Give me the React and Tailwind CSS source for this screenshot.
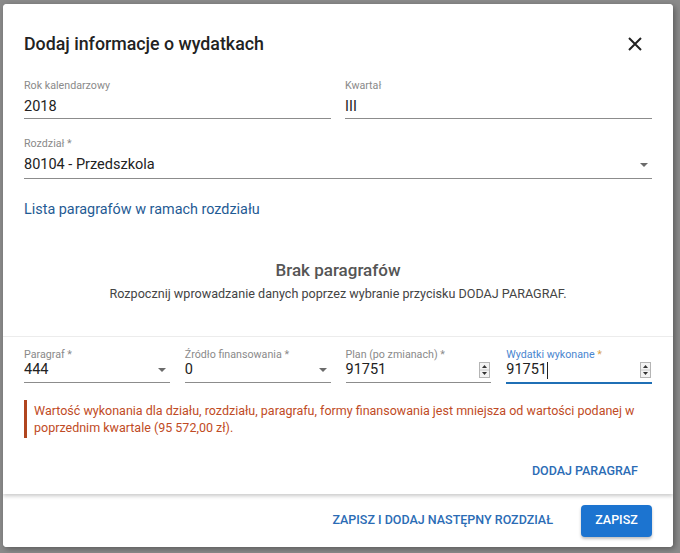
import React from "react";

function Caret() {
  return (
    <svg width="8" height="4" viewBox="0 0 8 4" className="shrink-0">
      <path d="M0 0 L8 0 L4 4 Z" fill="#6b6b6b" />
    </svg>
  );
}

function Spinner() {
  return (
    <svg width="11" height="16" viewBox="0 0 11 16" className="shrink-0">
      <rect x="0.5" y="0.5" width="10" height="15" fill="#f3f3f3" stroke="#b5b5b5" />
      <line x1="1" y1="8" x2="10" y2="8" stroke="#c8c8c8" />
      <path d="M3 6 L8 6 L5.5 3 Z" fill="#333" />
      <path d="M3 10 L8 10 L5.5 13 Z" fill="#333" />
    </svg>
  );
}

function TopField({ label, value }) {
  return (
    <div>
      <div className="text-[10.7px] leading-[13px] text-[#8a8a8a]">{label}</div>
      <div className="pt-[5px] pb-[1px] text-[14.5px] leading-[20px] text-[#222] border-b border-[#8c8c8c]">
        {value}
      </div>
    </div>
  );
}

function RowField({ label, value, select, focused }) {
  return (
    <div>
      <div
        className={
          "text-[10.7px] leading-[13px] " +
          (focused ? "text-[#4a86cf]" : "text-[#8a8a8a]")
        }
      >
        {label} <span className={focused ? "text-[#d9a14a]" : ""}>*</span>
      </div>
      <div
        className={
          "flex items-center justify-between pb-[3px] text-[14.5px] leading-[18px] text-[#222] " +
          (focused ? "border-b-2 border-[#1f6fb5]" : "border-b border-[#8c8c8c] mb-[1px]")
        }
      >
        <span className="flex items-center">
          {value}
          {focused && <span className="inline-block w-[1px] h-[17px] bg-[#222]" />}
        </span>
        {select ? (
          <span className="mr-[4px]">
            <Caret />
          </span>
        ) : (
          <span className="mr-[1px]">
            <Spinner />
          </span>
        )}
      </div>
    </div>
  );
}

export default function App() {
  return (
    <div className="w-[680px] h-[553px] bg-[#8b8b8b] overflow-hidden pt-[4px] pl-[3px] font-[Roboto,sans-serif]">
      <div className="w-[670px] h-[543px] bg-white rounded-[4px] flex flex-col overflow-hidden shadow-[2px_2px_6px_rgba(0,0,0,0.35)]">
        <div className="relative z-10 flex-1 flex flex-col bg-white shadow-[0_2px_4px_rgba(0,0,0,0.22)]">
          {/* header */}
          <div className="flex items-center justify-between pl-[21px] pr-[31px] pt-[28px]">
            <h1 className="text-[17.8px] leading-[24px] font-medium text-[#222]">
              Dodaj informacje o wydatkach
            </h1>
            <svg width="14" height="14" viewBox="0 0 14 14">
              <path d="M1 1 L13 13 M13 1 L1 13" stroke="#222" strokeWidth="2" />
            </svg>
          </div>

          <div className="px-[21px] pt-[23px]">
            <div className="grid grid-cols-2 gap-x-[14px]">
              <TopField label="Rok kalendarzowy" value="2018" />
              <TopField label="Kwartał" value="III" />
            </div>

            <div className="mt-[18px]">
              <div className="text-[10.7px] leading-[13px] text-[#8a8a8a]">Rozdział *</div>
              <div className="flex items-center justify-between pt-[5px] pb-[3px] text-[14.5px] leading-[20px] text-[#222] border-b border-[#8c8c8c]">
                <span>80104 - Przedszkola</span>
                <span className="mr-[4px]">
                  <Caret />
                </span>
              </div>
            </div>

            <div className="mt-[21px] text-[14.4px] leading-[20px] text-[#1f5b94]">
              Lista paragrafów w ramach rozdziału
            </div>
          </div>

          <div className="mt-[38px] pb-[32px] border-b border-[#ececec] text-center">
            <div className="text-[17px] leading-[24px] font-medium text-[#555]">Brak paragrafów</div>
            <div className="mt-[2px] text-[12.6px] leading-[20px] text-[#444]">
              Rozpocznij wprowadzanie danych poprzez wybranie przycisku DODAJ PARAGRAF.
            </div>
          </div>

          <div className="px-[21px] pt-[11px]">
            <div className="grid grid-cols-4 gap-x-[15px]">
              <RowField label="Paragraf" value="444" select />
              <RowField label="Źródło finansowania" value="0" select />
              <RowField label="Plan (po zmianach)" value="91751" />
              <RowField label="Wydatki wykonane" value="91751" focused />
            </div>

            <div className="mt-[16px] border-l-[3px] border-[#b0451f] pl-[7px] py-[2px] text-[12.5px] leading-[17px] text-[#bf4b25]">
              Wartość wykonania dla działu, rozdziału, paragrafu, formy finansowania jest mniejsza od wartości podanej w poprzednim kwartale (95 572,00 zł).
            </div>

            <div className="flex justify-end mt-[24px] pr-[14px]">
              <span className="text-[12.5px] leading-[18px] font-medium text-[#2b6cb5]">DODAJ PARAGRAF</span>
            </div>
          </div>
        </div>

        <div className="h-[53px] shrink-0 flex items-center justify-end gap-[28px] pr-[21px] bg-white">
          <span className="text-[12.5px] font-medium text-[#2b6cb5]">ZAPISZ I DODAJ NASTĘPNY ROZDZIAŁ</span>
          <button className="h-[32px] w-[71px] rounded-[4px] bg-[#1c74d0] text-white text-[12.5px] font-medium shadow-[0_2px_3px_rgba(0,0,0,0.25)]">
            ZAPISZ
          </button>
        </div>
      </div>
    </div>
  );
}
